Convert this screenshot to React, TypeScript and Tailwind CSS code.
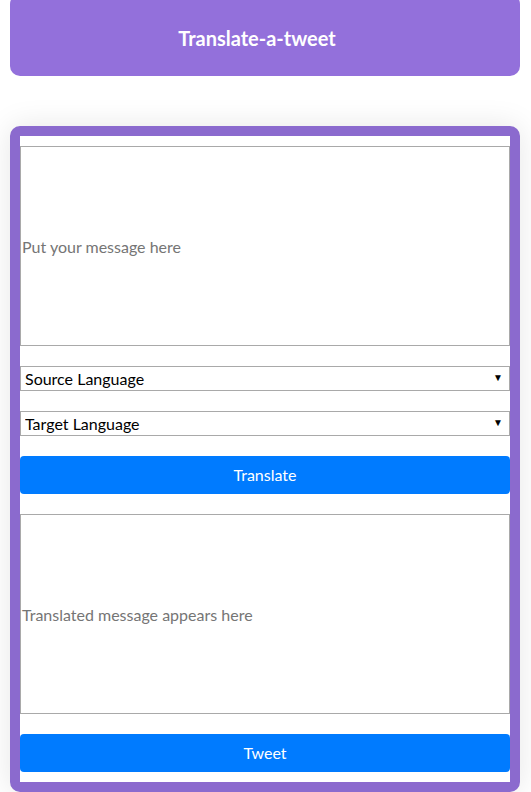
import { useState } from "react";

const font = { fontFamily: "Lato, 'Open Sans', sans-serif" };

const languages = ["English", "Spanish", "French", "German", "Japanese"];

const App = () => {
  const [message, setMessage] = useState("");
  const [source, setSource] = useState("");
  const [target, setTarget] = useState("");

  return (
    <div className="min-h-screen bg-white text-[16px]" style={font}>
      <div className="ml-[10px] w-[510px]">
        {/* Header */}
        <div className="-mt-[6px] h-[82px] rounded-[10px] bg-[#9370DB] pt-[6px] pr-[16px] flex items-center justify-center">
          <h1 className="text-[20px] font-bold text-white">Translate-a-tweet</h1>
        </div>

        {/* Card */}
        <div className="mt-[50px] rounded-[10px] border-[10px] border-[#8B6ACE] bg-white pt-[10px] pb-[10px] shadow-[0_0_30px_rgba(0,0,0,0.1)] flex flex-col gap-[20px]">
          <textarea
            value={message}
            onChange={(e) => setMessage(e.target.value)}
            placeholder="Put your message here"
            className="block h-[200px] w-full resize-none border border-[#a9a9a9] px-[1px] pt-[90px] leading-[20px] outline-none placeholder:text-[#757575]"
          />

          <div className="relative">
            <select
              value={source}
              onChange={(e) => setSource(e.target.value)}
              className="block h-[25px] w-full appearance-none border border-[#a9a9a9] bg-white pl-[4px] leading-[22px] text-black outline-none"
            >
              <option value="">Source Language</option>
              {languages.map((l) => (
                <option key={l}>{l}</option>
              ))}
            </select>
            <span className="pointer-events-none absolute right-[7px] top-[4px] text-[10px] text-black">▼</span>
          </div>

          <div className="relative">
            <select
              value={target}
              onChange={(e) => setTarget(e.target.value)}
              className="block h-[25px] w-full appearance-none border border-[#a9a9a9] bg-white pl-[4px] leading-[22px] text-black outline-none"
            >
              <option value="">Target Language</option>
              {languages.map((l) => (
                <option key={l}>{l}</option>
              ))}
            </select>
            <span className="pointer-events-none absolute right-[7px] top-[4px] text-[10px] text-black">▼</span>
          </div>

          <button className="h-[38px] w-full rounded-[4px] bg-[#007bff] text-white">Translate</button>

          <textarea
            readOnly
            placeholder="Translated message appears here"
            className="block h-[200px] w-full resize-none border border-[#a9a9a9] px-[1px] pt-[90px] leading-[20px] outline-none placeholder:text-[#757575]"
          />

          <button className="h-[38px] w-full rounded-[4px] bg-[#007bff] text-white">Tweet</button>
        </div>
      </div>
    </div>
  );
};

export default App;
